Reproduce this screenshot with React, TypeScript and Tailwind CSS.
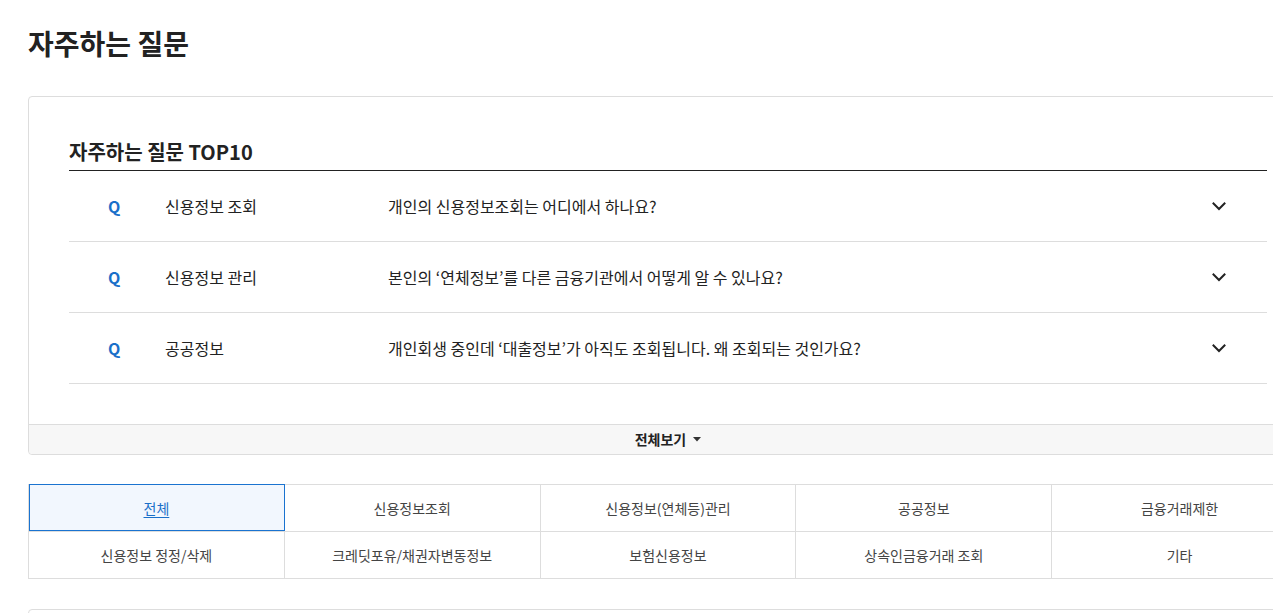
import React from "react";

const rows = [
  { cat: "신용정보 조회", q: "개인의 신용정보조회는 어디에서 하나요?" },
  { cat: "신용정보 관리", q: "본인의 ‘연체정보’를 다른 금융기관에서 어떻게 알 수 있나요?" },
  { cat: "공공정보", q: "개인회생 중인데 ‘대출정보’가 아직도 조회됩니다. 왜 조회되는 것인가요?" },
];

const tabs = [
  "전체",
  "신용정보조회",
  "신용정보(연체등)관리",
  "공공정보",
  "금융거래제한",
  "신용정보 정정/삭제",
  "크레딧포유/채권자변동정보",
  "보험신용정보",
  "상속인금융거래 조회",
  "기타",
];

function Chevron() {
  return (
    <svg width="14" height="9" viewBox="0 0 14 9" fill="none">
      <path d="M1.5 1.5 L7 7 L12.5 1.5" stroke="#222" strokeWidth="2" strokeLinecap="square" />
    </svg>
  );
}

export default function App() {
  return (
    <div
      className="bg-white min-h-[613px] pl-[28px] pt-[23px] overflow-hidden"
      style={{ fontFamily: '"Noto Sans CJK KR", "Noto Sans", sans-serif' }}
    >
      <h1 className="text-[28px] leading-[40px] font-bold text-[#222]">자주하는 질문</h1>

      <div className="mt-[33px] w-[1280px] shrink-0 border border-[#dddddd] rounded-[4px] bg-white">
        <div className="px-[40px] pt-[40px]">
          <h2 className="text-[20px] leading-[30px] font-bold text-[#222] pb-[3px] border-b border-[#222]">
            자주하는 질문 TOP10
          </h2>
          {rows.map((r, i) => (
            <div key={i} className="flex items-center h-[71px] border-b border-[#dddddd]">
              <span className="w-[96px] pl-[39px] text-[16px] font-bold text-[#1a6fc9]">Q</span>
              <span className="w-[223px] text-[16px] text-[#222]">{r.cat}</span>
              <span className="flex-1 text-[16px] text-[#222]">{r.q}</span>
              <span className="mr-[41px] flex items-center">
                <Chevron />
              </span>
            </div>
          ))}
        </div>
        <div className="mt-[40px] h-[30px] border-t border-[#dddddd] bg-[#f7f7f7] flex items-center justify-center rounded-b-[4px]">
          <span className="text-[14px] font-bold text-[#222]">전체보기</span>
          <svg className="ml-[7px]" width="8" height="5" viewBox="0 0 8 5">
            <path d="M0 0 L8 0 L4 4.5 Z" fill="#333" />
          </svg>
        </div>
      </div>

      <div className="mt-[29px] w-[1280px] grid grid-cols-5 border-l border-b border-[#dddddd]">
        {tabs.map((t, i) => (
          <div
            key={i}
            className={
              i === 0
                ? "h-[47px] flex items-center justify-center bg-[#f2f7fe] outline outline-1 outline-[#1a73d0] -outline-offset-1 border-r border-t border-[#1a73d0] text-[14px] text-[#1a6fc9] underline underline-offset-[3px]"
                : "h-[47px] flex items-center justify-center border-r border-t border-[#dddddd] text-[14px] text-[#444]"
            }
          >
            {t}
          </div>
        ))}
      </div>

      <div className="mt-[30px] w-[1280px] h-[120px] border border-[#dddddd] rounded-[4px]"></div>
    </div>
  );
}
